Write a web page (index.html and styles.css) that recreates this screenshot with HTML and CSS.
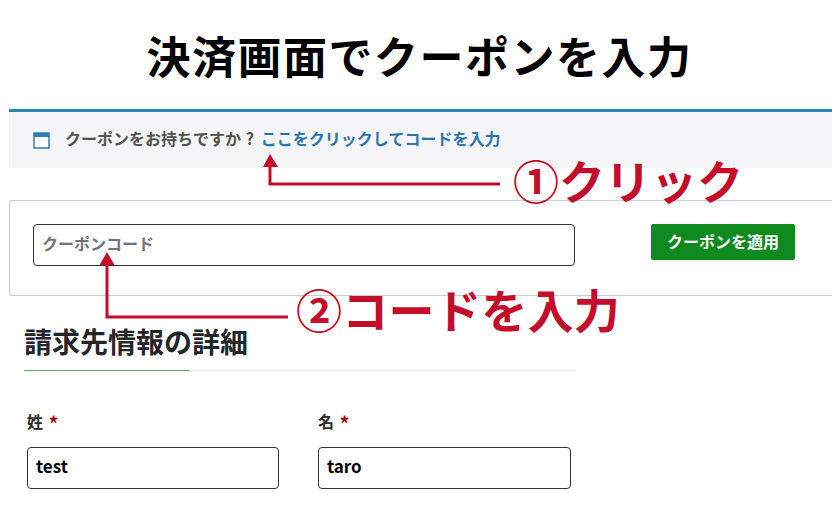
FILE: index.html
```html
<!DOCTYPE html>
<html lang="ja">
<head>
    <meta charset="UTF-8">
    <meta name="viewport" content="width=device-width, initial-scale=1.0">
    <title>決済画面でクーポンを入力</title>
    <link rel="stylesheet" href="styles.css">
</head>
<body>
    <h1 class="pageTitle">決済画面でクーポンを入力</h1>

    <div class="notice">
        <svg class="noticeIcon" width="17" height="17" viewBox="0 0 17 17">
            <rect x="1" y="1" width="15" height="15" fill="#fff" stroke="#2a7fb5" stroke-width="1.5"/>
            <rect x="1" y="1" width="15" height="4" fill="#2a7fb5"/>
        </svg>
        <span class="noticeText">クーポンをお持ちですか ?</span>
        <a class="noticeLink" href="#">ここをクリックしてコードを入力</a>
    </div>

    <form class="couponBox">
        <input class="couponInput" type="text" placeholder="クーポンコード">
        <button class="couponButton" type="button">クーポンを適用</button>
    </form>

    <section class="billing">
        <h2 class="billingTitle">請求先情報の詳細</h2>
        <div class="nameFields">
            <div class="field">
                <label>姓 <span class="required">*</span></label>
                <input type="text" value="test">
            </div>
            <div class="field">
                <label>名 <span class="required">*</span></label>
                <input type="text" value="taro">
            </div>
        </div>
    </section>

    <!-- annotations drawn over the screenshot -->
    <svg class="arrows" width="832" height="506" viewBox="0 0 832 506">
        <path d="M270 165V184H500" fill="none" stroke="#c30d2b" stroke-width="3"/>
        <path d="M270 154L278 167H263Z" fill="#c30d2b"/>
        <path d="M107 263V317H288" fill="none" stroke="#c30d2b" stroke-width="3"/>
        <path d="M107 252L114.500 265H99.500Z" fill="#c30d2b"/>
    </svg>
    <div class="callout calloutClick">①クリック</div>
    <div class="callout calloutCode">②コードを入力</div>
</body>
</html>
```

FILE: styles.css
```css
* {
    box-sizing: border-box;
}

html, body {
    margin: 0;
    height: 506px;
    overflow: hidden;
}

body {
    position: relative;
    width: 832px;
    background: #fff;
    font-family: "Noto Sans CJK JP", "Noto Sans", sans-serif;
    font-weight: 700;
    color: #222;
}

.pageTitle {
    margin: 0;
    height: 109px;
    padding: 23px 0 0 7px;
    font-size: 44px;
    line-height: 64px;
    letter-spacing: 1.5px;
    text-align: center;
    color: #000;
}

.notice {
    display: flex;
    align-items: center;
    height: 59px;
    margin-left: 9px;
    padding: 0 0 5px 24px;
    background: #f5f5f8;
    border-top: 3px solid #2a86b5;
    font-size: 16px;
}

.noticeIcon {
    margin: 5px 15px 0 0;
}

.noticeText {
    color: #515151;
    margin-right: 7px;
    word-spacing: 1px;
}

.noticeLink {
    color: #2a75b0;
    text-decoration: none;
}

.couponBox {
    display: flex;
    align-items: flex-start;
    height: 96px;
    margin: 32px 0 0 9px;
    padding: 23px 0 0 23px;
    border: 1px solid #ccc;
    border-right: none;
    border-radius: 4px 0 0 4px;
}

input {
    font-family: inherit;
    font-weight: 700;
    border: 1px solid #333;
    border-radius: 4px;
    background: #fff;
    outline: none;
}

.couponInput {
    width: 542px;
    height: 42px;
    padding: 0 8px 4px;
    font-size: 16px;
}

.couponInput::placeholder {
    color: #6f7378;
    opacity: 1;
}

.couponButton {
    width: 144px;
    height: 36px;
    margin-left: 76px;
    padding: 0 0 3px;
    border: none;
    border-radius: 2px;
    background: #0f8a1e;
    color: #fff;
    font-family: inherit;
    font-weight: 700;
    font-size: 16px;
}

.billing {
    width: 575px;
    padding: 15px 0 0 24px;
}

.billingTitle {
    position: relative;
    margin: 0;
    height: 60px;
    padding-top: 11px;
    font-size: 28px;
    line-height: 38px;
    color: #22262a;
    border-bottom: 1px solid #e6e6e6;
}

.billingTitle::after {
    content: "";
    position: absolute;
    left: 0;
    bottom: -1px;
    width: 165px;
    height: 1px;
    background: #5fa866;
}

.nameFields {
    display: flex;
    gap: 39px;
    padding: 38px 0 0 3px;
}

.field {
    display: flex;
    flex-direction: column;
    gap: 14px;
}

.field label {
    font-size: 16px;
    line-height: 24px;
    color: #2b2b2b;
}

.required {
    color: #a80000;
    margin-left: 2px;
    font-size: 19px;
    line-height: 20px;
    vertical-align: -3px;
}

.field input {
    width: 252px;
    height: 42px;
    padding: 0 8px 6px;
    font-size: 17px;
    color: #000;
}

.field + .field input {
    width: 253px;
}

.arrows {
    position: absolute;
    left: 0;
    top: 0;
    pointer-events: none;
}

.callout {
    position: absolute;
    font-weight: 700;
    font-size: 46px;
    line-height: 60px;
    color: #c30d2b;
    white-space: nowrap;
}

.calloutClick {
    left: 513px;
    top: 149px;
}

.calloutCode {
    left: 296px;
    top: 278px;
    letter-spacing: 0.3px;
}
```
